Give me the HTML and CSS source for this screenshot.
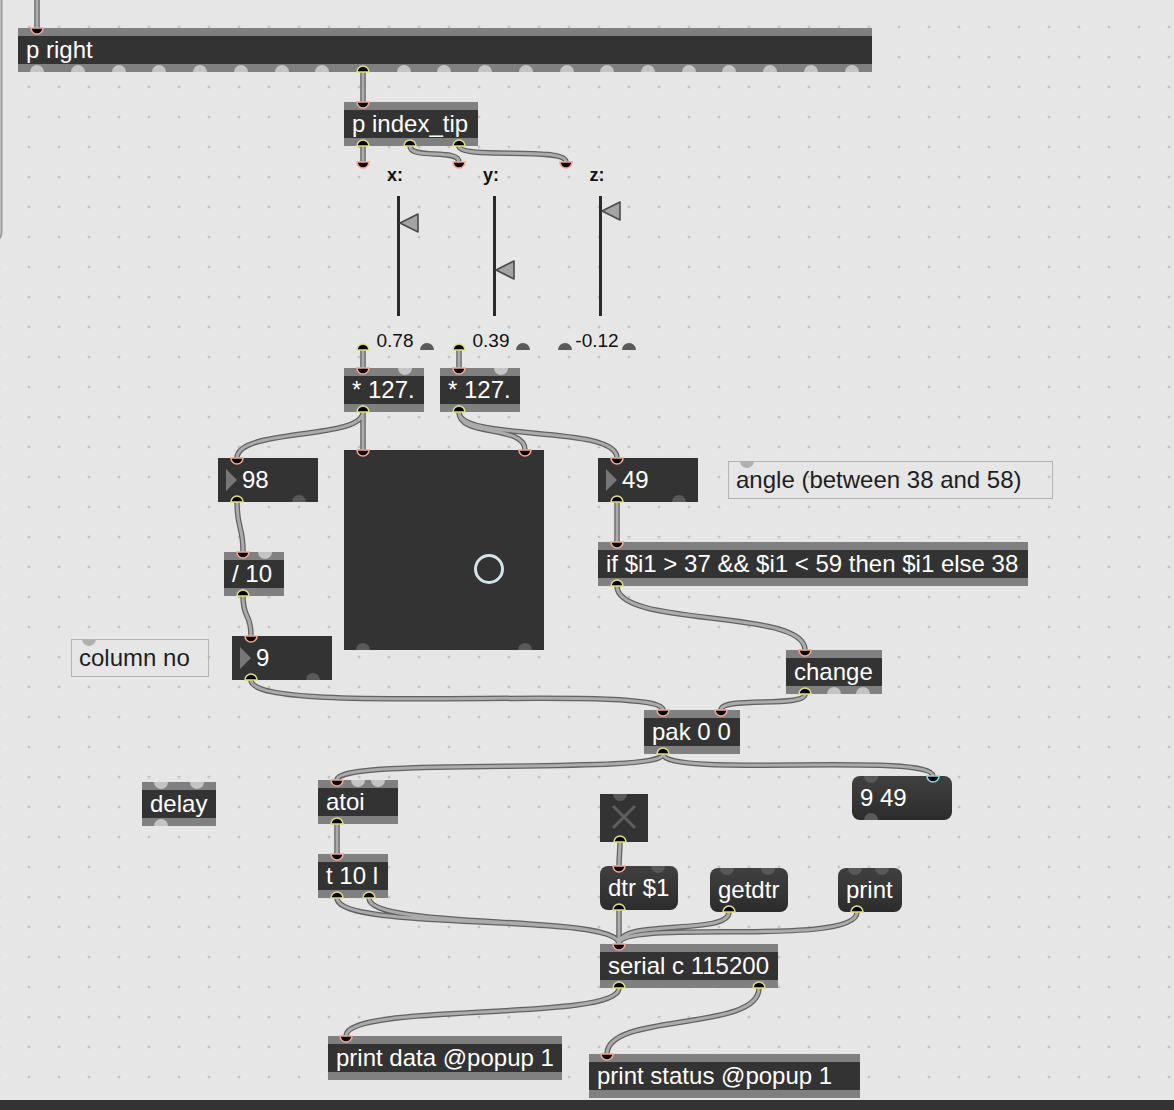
FILE: index.html
```html
<!DOCTYPE html>
<html lang="en">
<head>
    <meta charset="UTF-8">
    <meta name="viewport" content="width=device-width, initial-scale=1.0">
    <title>hand tracking – patcher</title>
    <link rel="stylesheet" href="styles.css">
</head>
<body>

    <div class="patcher">

        <!-- object boxes -->
        <div class="box o-pright">p right</div>
        <div class="box o-index">p index_tip</div>

        <div class="lslider s-x">
            <div class="ls-label">x:</div>
            <div class="ls-track">
                <svg class="ls-pointer" style="top:17px" width="20" height="20" viewBox="0 0 20 20"><polygon points="1,10 19,1 19,19"/></svg>
            </div>
            <div class="ls-value">0.78</div>
        </div>
        <div class="lslider s-y">
            <div class="ls-label">y:</div>
            <div class="ls-track">
                <svg class="ls-pointer" style="top:64px" width="20" height="20" viewBox="0 0 20 20"><polygon points="1,10 19,1 19,19"/></svg>
            </div>
            <div class="ls-value">0.39</div>
        </div>
        <div class="lslider s-z">
            <div class="ls-label">z:</div>
            <div class="ls-track">
                <svg class="ls-pointer" style="top:5px" width="20" height="20" viewBox="0 0 20 20"><polygon points="1,10 19,1 19,19"/></svg>
            </div>
            <div class="ls-value">-0.12</div>
        </div>

        <div class="box o-mul1">* 127.</div>
        <div class="box o-mul2">* 127.</div>

        <div class="num n-98">98</div>
        <div class="pad"><span class="pad-knob"></span></div>
        <div class="num n-49">49</div>
        <div class="comment c-angle">angle (between 38 and 58)</div>

        <div class="box o-div">/ 10</div>
        <div class="box o-if">if $i1 &gt; 37 &amp;&amp; $i1 &lt; 59 then $i1 else 38</div>

        <div class="comment c-col">column no</div>
        <div class="num n-9">9</div>

        <div class="box o-change">change</div>
        <div class="box o-pak">pak 0 0</div>
        <div class="msg m-list">9 49</div>

        <div class="box o-delay">delay</div>
        <div class="box o-atoi">atoi</div>
        <div class="box o-trig">t 10 l</div>

        <div class="toggle">
            <svg width="48" height="48" viewBox="0 0 48 48"><path d="M13 12L35 34M35 12L13 34"/></svg>
        </div>
        <div class="msg m-dtr">dtr $1</div>
        <div class="msg m-getdtr">getdtr</div>
        <div class="msg m-print">print</div>

        <div class="box o-serial">serial c 115200</div>
        <div class="box o-pdata">print data @popup 1</div>
        <div class="box o-pstatus">print status @popup 1</div>

        <!-- patch cords and ports -->
        <svg class="wires" width="1174" height="1100" viewBox="0 0 1174 1100">
            <path class="frame" d="M1.5 0V232Q1.5 241 -8 242"/>

            <g class="cord">
                <path id="cords" d="M37 -5V28
                    M363 72V102
                    M363 146V162
                    M410 146C410 160 459 148 459 162
                    M459 146C459 160 566 146 566 162
                    M363 350V368
                    M459 350V368
                    M363 412C363 440 237 428 237 458
                    M363 412V450
                    M459 412C459 438 525 424 525 450
                    M459 412C459 442 617 424 617 458
                    M237 502C237 530 243 524 243 552
                    M243 596C243 620 251 612 251 636
                    M617 502V542
                    M617 586C617 628 805 608 805 650
                    M251 680C251 718 663 682 663 710
                    M805 694C805 708 721 696 721 710
                    M663 754C663 776 337 756 337 780
                    M663 754C663 778 933 752 933 776
                    M337 824V854
                    M620 842C620 852 619 856 619 866
                    M337 898C337 932 619 912 619 944
                    M369 898C369 930 619 914 619 944
                    M619 910V944
                    M729 912C729 936 619 918 619 944
                    M857 912C857 948 619 918 619 944
                    M619 988C619 1022 346 1002 346 1036
                    M759 988C759 1032 607 1012 607 1054"/>
            </g>
            <use href="#cords" class="cord-core"/>

            <!-- free ports on banded boxes -->
            <g class="free-light">
                <path d="M30 72a7 7 0 0 1 14 0z"/><path d="M71 72a7 7 0 0 1 14 0z"/>
                <path d="M112 72a7 7 0 0 1 14 0z"/><path d="M152 72a7 7 0 0 1 14 0z"/>
                <path d="M193 72a7 7 0 0 1 14 0z"/><path d="M234 72a7 7 0 0 1 14 0z"/>
                <path d="M275 72a7 7 0 0 1 14 0z"/><path d="M315 72a7 7 0 0 1 14 0z"/>
                <path d="M397 72a7 7 0 0 1 14 0z"/><path d="M437 72a7 7 0 0 1 14 0z"/>
                <path d="M478 72a7 7 0 0 1 14 0z"/><path d="M519 72a7 7 0 0 1 14 0z"/>
                <path d="M560 72a7 7 0 0 1 14 0z"/><path d="M600 72a7 7 0 0 1 14 0z"/>
                <path d="M641 72a7 7 0 0 1 14 0z"/><path d="M682 72a7 7 0 0 1 14 0z"/>
                <path d="M722 72a7 7 0 0 1 14 0z"/><path d="M763 72a7 7 0 0 1 14 0z"/>
                <path d="M804 72a7 7 0 0 1 14 0z"/><path d="M845 72a7 7 0 0 1 14 0z"/>
                <path d="M398 368a7 7 0 0 0 14 0z"/><path d="M494 368a7 7 0 0 0 14 0z"/>
                <path d="M258 552a7 7 0 0 0 14 0z"/>
                <path d="M827 694a7 7 0 0 1 14 0z"/><path d="M856 694a7 7 0 0 1 14 0z"/>
                <path d="M154 782a7 7 0 0 0 14 0z"/><path d="M190 782a7 7 0 0 0 14 0z"/>
                <path d="M154 826a7 7 0 0 1 14 0z"/>
                <path d="M351 780a7 7 0 0 0 14 0z"/><path d="M371 780a7 7 0 0 0 14 0z"/>
            </g>

            <!-- free ports on dark / transparent objects -->
            <g class="free-dark">
                <path d="M420 350a7 7 0 0 1 14 0z"/><path d="M516 350a7 7 0 0 1 14 0z"/>
                <path d="M558 350a7 7 0 0 1 14 0z"/><path d="M622 350a7 7 0 0 1 14 0z"/>
                <path d="M292 502a7 7 0 0 1 14 0z"/><path d="M672 502a7 7 0 0 1 14 0z"/>
                <path d="M306 680a7 7 0 0 1 14 0z"/>
                <path d="M356 650a7 7 0 0 1 14 0z"/><path d="M518 650a7 7 0 0 1 14 0z"/>
                <path d="M864 776a7 7 0 0 0 14 0z"/><path d="M864 820a7 7 0 0 1 14 0z"/>
                <path d="M613 794a7 7 0 0 0 14 0z"/>
                <path d="M651 866a7 7 0 0 0 14 0z"/>
                <path d="M720 868a7 7 0 0 0 14 0z"/><path d="M761 868a7 7 0 0 0 14 0z"/>
                <path d="M848 868a7 7 0 0 0 14 0z"/><path d="M875 868a7 7 0 0 0 14 0z"/>
            </g>

            <g class="free-note">
                <path d="M740 461a7 7 0 0 0 14 0z"/><path d="M82 639a7 7 0 0 0 14 0z"/>
            </g>

            <!-- connected inlets -->
            <g class="inlet">
                <path d="M31 28a6 6 0 0 0 12 0z"/><path d="M357 102a6 6 0 0 0 12 0z"/>
                <path d="M357 162a6 6 0 0 0 12 0z"/><path d="M453 162a6 6 0 0 0 12 0z"/>
                <path d="M560 162a6 6 0 0 0 12 0z"/>
                <path d="M357 368a6 6 0 0 0 12 0z"/><path d="M453 368a6 6 0 0 0 12 0z"/>
                <path d="M231 458a6 6 0 0 0 12 0z"/><path d="M357 450a6 6 0 0 0 12 0z"/>
                <path d="M519 450a6 6 0 0 0 12 0z"/><path d="M611 458a6 6 0 0 0 12 0z"/>
                <path d="M611 542a6 6 0 0 0 12 0z"/><path d="M237 552a6 6 0 0 0 12 0z"/>
                <path d="M245 636a6 6 0 0 0 12 0z"/><path d="M799 650a6 6 0 0 0 12 0z"/>
                <path d="M657 710a6 6 0 0 0 12 0z"/><path d="M715 710a6 6 0 0 0 12 0z"/>
                <path d="M331 780a6 6 0 0 0 12 0z"/><path d="M331 854a6 6 0 0 0 12 0z"/>
                <path d="M613 866a6 6 0 0 0 12 0z"/><path d="M613 944a6 6 0 0 0 12 0z"/>
                <path d="M340 1036a6 6 0 0 0 12 0z"/><path d="M601 1054a6 6 0 0 0 12 0z"/>
            </g>
            <g class="inlet-cold">
                <path d="M927 776a6 6 0 0 0 12 0z"/>
            </g>

            <!-- connected outlets -->
            <g class="outlet">
                <path d="M357 72a6 6 0 0 1 12 0z"/>
                <path d="M357 146a6 6 0 0 1 12 0z"/><path d="M404 146a6 6 0 0 1 12 0z"/>
                <path d="M453 146a6 6 0 0 1 12 0z"/>
                <path d="M357 350a6 6 0 0 1 12 0z"/><path d="M453 350a6 6 0 0 1 12 0z"/>
                <path d="M357 412a6 6 0 0 1 12 0z"/><path d="M453 412a6 6 0 0 1 12 0z"/>
                <path d="M231 502a6 6 0 0 1 12 0z"/><path d="M611 502a6 6 0 0 1 12 0z"/>
                <path d="M237 596a6 6 0 0 1 12 0z"/><path d="M611 586a6 6 0 0 1 12 0z"/>
                <path d="M245 680a6 6 0 0 1 12 0z"/><path d="M799 694a6 6 0 0 1 12 0z"/>
                <path d="M657 754a6 6 0 0 1 12 0z"/><path d="M331 824a6 6 0 0 1 12 0z"/>
                <path d="M331 898a6 6 0 0 1 12 0z"/><path d="M363 898a6 6 0 0 1 12 0z"/>
                <path d="M614 842a6 6 0 0 1 12 0z"/><path d="M613 910a6 6 0 0 1 12 0z"/>
                <path d="M723 912a6 6 0 0 1 12 0z"/><path d="M851 912a6 6 0 0 1 12 0z"/>
                <path d="M613 988a6 6 0 0 1 12 0z"/><path d="M753 988a6 6 0 0 1 12 0z"/>
            </g>
        </svg>
    </div>
    <div class="statusbar"></div>

</body>
</html>
```

FILE: styles.css
```css
body {
    margin: 0;
    background-color: #e6e6e6;
    font-family: 'Liberation Sans', Arial, sans-serif;
    overflow: hidden;
}
.patcher {
    position: relative;
    width: 1174px;
    height: 1100px;
    overflow: hidden;
    background-color: #e6e6e6;
    background-image: radial-gradient(circle at center, #c3c3c3 0, #c3c3c3 1px, transparent 1.8px);
    background-size: 30px 30px;
    background-position: 14px 12px;
}
.statusbar {
    height: 10px;
    background-color: #333;
}

/* standard object box */
.box {
    position: absolute;
    box-sizing: border-box;
    height: 44px;
    padding-left: 8px;
    background-color: #333;
    border-top: 8px solid #808080;
    border-bottom: 8px solid #808080;
    color: #fff;
    font-size: 24px;
    line-height: 28px;
    white-space: nowrap;
    overflow: hidden;
}
.o-pright { left: 18px; top: 28px; width: 854px; }
.o-index { left: 344px; top: 102px; width: 134px; }
.o-mul1 { left: 344px; top: 368px; width: 80px; }
.o-mul2 { left: 440px; top: 368px; width: 80px; }
.o-div { left: 224px; top: 552px; width: 60px; }
.o-if { left: 598px; top: 542px; width: 430px; }
.o-change { left: 786px; top: 650px; width: 96px; }
.o-pak { left: 644px; top: 710px; width: 96px; }
.o-delay { left: 142px; top: 782px; width: 74px; }
.o-atoi { left: 318px; top: 780px; width: 80px; }
.o-trig { left: 318px; top: 854px; width: 70px; }
.o-serial { left: 600px; top: 944px; width: 178px; }
.o-pdata { left: 328px; top: 1036px; width: 234px; }
.o-pstatus { left: 589px; top: 1054px; width: 271px; }

/* number boxes */
.num {
    position: absolute;
    box-sizing: border-box;
    width: 100px;
    height: 44px;
    padding-left: 24px;
    background-color: #333;
    color: #fff;
    font-size: 24px;
    line-height: 44px;
}
.num::before {
    content: "";
    position: absolute;
    left: 8px;
    top: 11px;
    border-left: 11px solid #777;
    border-top: 11px solid transparent;
    border-bottom: 11px solid transparent;
}
.n-98 { left: 218px; top: 458px; }
.n-49 { left: 598px; top: 458px; }
.n-9 { left: 232px; top: 636px; }

/* message boxes */
.msg {
    position: absolute;
    box-sizing: border-box;
    height: 44px;
    padding-left: 8px;
    border-radius: 8px;
    background: linear-gradient(#404040, #2c2c2c);
    color: #fff;
    font-size: 24px;
    line-height: 44px;
    white-space: nowrap;
}
.m-list { left: 852px; top: 776px; width: 100px; }
.m-dtr { left: 600px; top: 866px; width: 78px; }
.m-getdtr { left: 710px; top: 868px; width: 78px; }
.m-print { left: 838px; top: 868px; width: 64px; }

/* comments */
.comment {
    position: absolute;
    box-sizing: border-box;
    height: 38px;
    padding-left: 7px;
    border: 1.5px solid #b3b3b3;
    color: #1e1e1e;
    font-size: 24px;
    line-height: 35px;
    white-space: nowrap;
}
.c-angle { left: 728px; top: 461px; width: 325px; }
.c-col { left: 71px; top: 639px; width: 138px; }

/* live.slider */
.lslider {
    position: absolute;
    top: 162px;
    width: 80px;
    display: flex;
    flex-direction: column;
    align-items: center;
}
.lslider > div {
    flex-shrink: 0;
}
.s-x { left: 355px; }
.s-y { left: 451px; }
.s-z { left: 557px; }
.ls-label {
    height: 26px;
    font-size: 18px;
    font-weight: bold;
    line-height: 26px;
    color: #111;
}
.ls-track {
    position: relative;
    align-self: flex-start;
    width: 3px;
    height: 120px;
    margin: 8px 0 0 42px;
    background-color: #2a2a2a;
}
.ls-pointer {
    position: absolute;
    left: 2px;
}
.ls-pointer polygon {
    fill: #a3a3a3;
    stroke: #4a4a4a;
    stroke-width: 1.6;
    stroke-linejoin: round;
}
.ls-value {
    margin-top: 14px;
    font-size: 19px;
    line-height: 22px;
    color: #111;
}

/* 2d pad */
.pad {
    position: absolute;
    left: 344px;
    top: 450px;
    width: 200px;
    height: 200px;
    background-color: #333;
}
.pad-knob {
    position: absolute;
    left: 130px;
    top: 104px;
    width: 24px;
    height: 24px;
    border: 3px solid #d2e4ea;
    border-radius: 50%;
}

/* toggle */
.toggle {
    position: absolute;
    left: 600px;
    top: 794px;
    width: 48px;
    height: 48px;
    background-color: #333;
}
.toggle svg {
    display: block;
}
.toggle path {
    stroke: #5e5e5e;
    stroke-width: 3;
    fill: none;
}

/* cords and ports overlay */
.wires {
    position: absolute;
    left: 0;
    top: 0;
    pointer-events: none;
}
.frame {
    fill: none;
    stroke: #9a9a9a;
    stroke-width: 2;
}
.cord {
    fill: none;
    stroke: #626262;
    stroke-width: 5.5;
}
.cord-core {
    fill: none;
    stroke: #ababab;
    stroke-width: 3;
}
.free-light path { fill: #c4c4c4; }
.free-dark path { fill: #595959; }
.free-note path { fill: #b0b0b0; }
.inlet path, .inlet-cold path, .outlet path {
    fill: #000;
    stroke-width: 1.6;
}
.inlet path { stroke: #f2a48e; }
.inlet-cold path { stroke: #8fd3e6; }
.outlet path { stroke: #dede78; }
```
